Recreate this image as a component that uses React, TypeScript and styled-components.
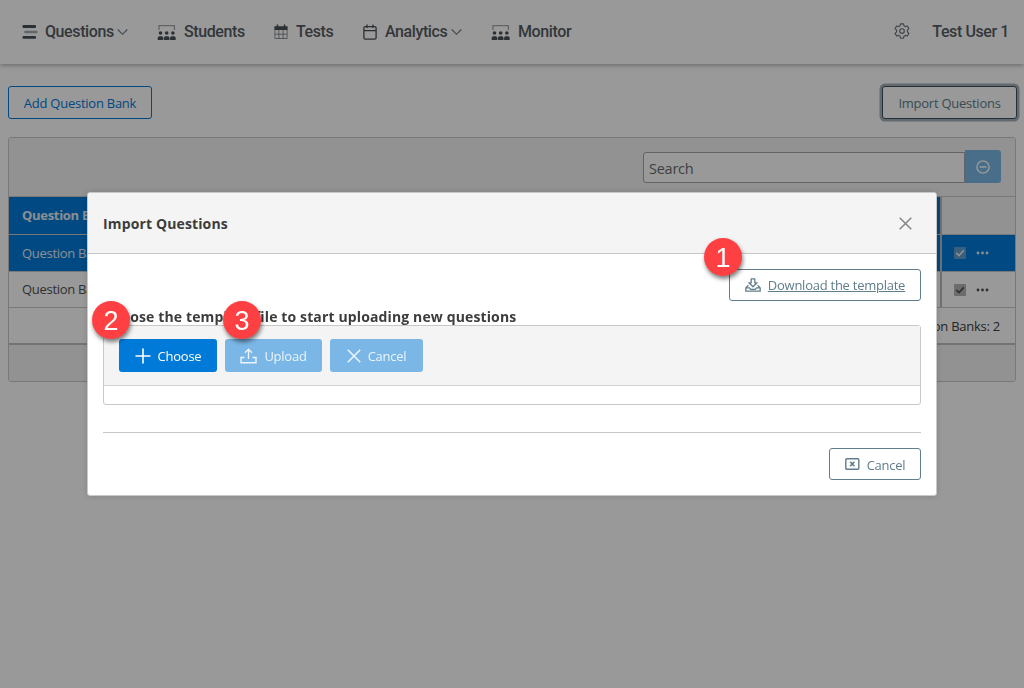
import React from 'react';
import styled, { createGlobalStyle, css } from 'styled-components';

const GlobalStyle = createGlobalStyle`
  * { box-sizing: border-box; }
  html, body { margin: 0; height: 100%; overflow: hidden; }
  body { background: #fff; color: #3c3c3c; font: 13px/19px "Open Sans", "Noto Sans", sans-serif; letter-spacing: -0.25px; }
  button, input { font: inherit; letter-spacing: inherit; margin: 0; }
  svg { display: block; flex: none; }
`;

const Page = styled.div`
  height: 688px;
  display: flex;
  flex-direction: column;
`;

const NavBar = styled.nav`
  height: 64px;
  flex: none;
  display: flex;
  align-items: center;
  padding: 0 15px 0 22px;
  font: 500 16px/20px Roboto, sans-serif;
  letter-spacing: -0.4px;
  color: #555c63;
  box-shadow: 0 1px 5px rgba(0, 0, 0, 0.35);
`;

const NavItem = styled.a<{ $width?: number; $gap?: number }>`
  display: flex;
  align-items: center;
  flex: none;
  gap: ${p => p.$gap ?? 8}px;
  ${p => p.$width && css`width: ${p.$width}px;`}
`;

const NavText = styled.span`
  white-space: nowrap;
`;

const Arrow = styled.span`
  margin-left: -4px;
`;

const Spacer = styled.div`
  flex: 1;
`;

const Gear = styled.span`
  margin: -3px 22px 0 0;
`;

const ActionRow = styled.div`
  display: flex;
  justify-content: space-between;
  padding: 22px 7px 18px 8px;
`;

const OutlineButton = styled.button<{ $tone: string; $focused?: boolean; $width: number; $height?: number }>`
  display: flex;
  align-items: center;
  justify-content: center;
  gap: 7px;
  width: ${p => p.$width}px;
  height: ${p => p.$height ?? 33}px;
  padding: ${p => (p.$height ? 0 : 1)}px 0 0;
  white-space: nowrap;
  color: ${p => p.$tone};
  background: #fff;
  border: 1px solid ${p => p.$tone};
  border-radius: 3px;
  ${p => p.$focused && css`box-shadow: 0 0 0 2.5px #a3b1bb; border-color: #3f4f5c;`}
`;

const Table = styled.section`
  margin: 0 8px;
  border: 1px solid #c8c8c8;
  border-radius: 3px;
  overflow: hidden;
`;

const TableToolbar = styled.div`
  height: 58px;
  background: #f4f4f4;
  display: flex;
  justify-content: flex-end;
  align-items: flex-end;
  padding: 0 14px 13px 0;
`;

const SearchInput = styled.input`
  width: 322px;
  height: 31px;
  border: 1px solid #a6a6a6;
  border-radius: 3px 0 0 3px;
  padding: 1px 5px 0;
  font-size: 14.5px;
  background: #fff;
  &::placeholder { color: #6c6c6c; opacity: 1; }
`;

const SearchButton = styled.button`
  width: 36px;
  height: 33px;
  display: flex;
  align-items: center;
  justify-content: center;
  border: 0;
  border-radius: 0 3px 3px 0;
  color: #fff;
  background: #7ab7e6;
`;

const Row = styled.div<{ $kind: 'head' | 'selected' | 'plain' }>`
  height: ${p => (p.$kind === 'head' ? 38 : p.$kind === 'selected' ? 37 : 36)}px;
  display: grid;
  grid-template-columns: 1fr 75px;
  border-top: 1px solid #c8c8c8;
  background: ${p => (p.$kind === 'selected' ? '#007ad9' : '#fff')};
  color: ${p => (p.$kind === 'plain' ? '#505050' : '#e8eef4')};
  ${p => (p.$kind === 'head' ? css`font-weight: 700; letter-spacing: -0.3px;` : css`letter-spacing: -0.3px;`)}
`;

const Cell = styled.div<{ $fill?: string }>`
  display: flex;
  align-items: center;
  gap: 7px;
  padding: 0 13px;
  background: ${p => p.$fill ?? 'transparent'};
  & + & { border-left: 2px solid #bdbdbd; padding: 0 12px; }
`;

const Check = styled.span<{ $tone: string }>`
  width: 12px;
  height: 12px;
  border-radius: 1px;
  background: ${p => p.$tone};
`;

const SummaryRow = styled.div`
  height: 36px;
  border-top: 1px solid #c8c8c8;
  display: flex;
  align-items: center;
  justify-content: flex-end;
  padding: 1px 15px 0 0;
`;

const TableFooter = styled.div`
  height: 38px;
  border-top: 2px solid #c0c0c0;
  background: #f4f4f4;
`;

const Backdrop = styled.div`
  position: fixed;
  inset: 0;
  display: flex;
  align-items: center;
  justify-content: center;
  background: rgba(0, 0, 0, 0.4);
`;

const Dialog = styled.div`
  position: relative;
  width: 850px;
  height: 304px;
  background: #fff;
  border: 1px solid #c8c8c8;
  border-radius: 3px;
  box-shadow: 0 0 6px rgba(0, 0, 0, 0.16);
`;

const DialogHeader = styled.header`
  height: 61px;
  display: flex;
  align-items: center;
  justify-content: space-between;
  padding: 0 24px 0 15px;
  background: #f4f4f4;
  border-bottom: 1px solid #c8c8c8;
  border-radius: 3px 3px 0 0;
  font-size: 14px;
  letter-spacing: 0.13px;
  font-weight: 700;
  color: #3c3c3c;
`;

const DialogBody = styled.div`
  padding: 15px;
`;

const TemplateRow = styled.div`
  display: flex;
  justify-content: flex-end;
`;

const Underlined = styled.span`
  text-decoration: underline;
`;

const Prompt = styled.h3`
  margin: 5px 0 0;
  height: 19px;
  font-size: 14px;
  line-height: 21px;
  font-weight: 700;
  letter-spacing: 0.13px;
  white-space: nowrap;
`;

const Uploader = styled.div`
  border: 1px solid #c8c8c8;
  border-radius: 3px;
  height: 80px;
`;

const UploadBar = styled.div`
  height: 60px;
  display: flex;
  gap: 8px;
  padding: 13px 15px;
  background: #f4f4f4;
  border-bottom: 1px solid #d4d4d4;
`;

const SolidButton = styled.button<{ $width: number; $disabled?: boolean }>`
  width: ${p => p.$width}px;
  height: 33px;
  display: flex;
  align-items: center;
  justify-content: center;
  gap: 7px;
  padding: 0;
  border: 0;
  border-radius: 3px;
  color: ${p => (p.$disabled ? '#ebf4fb' : '#fff')};
  background: ${p => (p.$disabled ? '#7ab7e6' : '#007ad9')};
`;

const ButtonLabel = styled.span`
  padding-top: 2px;
`;

const DialogFooter = styled.footer`
  margin-top: 27px;
  border-top: 1px solid #c8c8c8;
  padding-top: 15px;
  display: flex;
  justify-content: flex-end;
`;

const Marker = styled.span<{ $x: number; $y: number }>`
  position: absolute;
  left: ${p => p.$x}px;
  top: ${p => p.$y}px;
  width: 38px;
  height: 38px;
  border-radius: 50%;
  background: #ff4043;
  color: #fff;
  font: 27px/40px "Liberation Sans", Arial, sans-serif;
  letter-spacing: 0;
  text-align: center;
  box-shadow: 1px 3px 4px rgba(0, 0, 0, 0.5);
`;

const BarsIcon = () => (
  <svg width="16" height="14" viewBox="0 0 16 14" fill="#495057">
    <rect x="0.5" y="0" width="13.5" height="2.9" rx="1" />
    <rect x="2.3" y="5.7" width="13.2" height="2.5" rx="1" opacity=".5" />
    <rect x="0.5" y="10.9" width="13.5" height="2.9" rx="1" />
  </svg>
);

const ChevronIcon = () => (
  <svg width="11" height="8" viewBox="0 0 11 8" fill="none" stroke="#6c757d" strokeWidth="1.1">
    <path d="M.7 1.5 5.5 6.3l4.8-4.8" />
  </svg>
);

const PeopleIcon = () => (
  <svg width="20" height="17" viewBox="0 0 20 17" fill="#495057">
    <path d="M2 6V1.6h15.4V6" fill="none" stroke="#495057" strokeWidth="1.3" opacity=".5" />
    {[3.5, 9.7, 15.9].map(x => (
      <g key={x}>
        <circle cx={x} cy="9" r="1.8" />
        <path d={`M${x - 2.9} 15.3c0-2 .6-3 1.800-3h2.200c1.200 0 1.800 1 1.800 3q0 .8-.8.8h-4.200q-.8 0-.8-.8z`} />
      </g>
    ))}
  </svg>
);

const GridCalendarIcon = () => (
  <svg width="14" height="16" viewBox="0 0 14 16">
    <g fill="none" stroke="#495057" opacity=".6">
      <path d="M.9 6v8.5h12.2V6M1 10.2h12M4.9 6v8.5M9.1 6v8.5" />
    </g>
    <path d="M.4 2.2h2.3V.6h1.5v1.6h5.6V.6h1.5v1.6h2.3V6H.4z" fill="#495057" />
  </svg>
);

const CalendarIcon = () => (
  <svg width="14" height="16" viewBox="0 0 14 16" fill="none" stroke="#495057" strokeWidth="1.3">
    <rect x=".9" y="2.6" width="12.2" height="12.5" rx="1.4" />
    <path d="M1 6.6h12M4 .5v3.600M10 .5v3.600" />
  </svg>
);

const GearIcon = () => (
  <svg width="16" height="16" viewBox="0 0 16 16" fill="none" stroke="#6c757d" strokeWidth="1.15" strokeLinejoin="round">
    <path d="M6.5.8h3l.5 2 1.3.8 2.100-.6 1.500 2.600-1.500 1.600v1.600l1.500 1.600-1.500 2.600-2.100-.6-1.300.8-.5 2h-3l-.5-2-1.300-.8-2.100.6-1.500-2.600 1.500-1.600V7.200L1.100 5.600 2.600 3l2.100.6L6 2.800z" />
    <circle cx="8" cy="8" r="2.3" />
  </svg>
);

const MinusCircleIcon = () => (
  <svg width="14" height="14" viewBox="0 0 14 14" fill="none" stroke="currentColor" strokeWidth="1.4">
    <circle cx="7" cy="7" r="6.1" />
    <path d="M3.500 7h7" />
  </svg>
);

const CheckIcon = () => (
  <svg width="12" height="12" viewBox="0 0 12 12" fill="none" stroke="currentColor" strokeWidth="1.7">
    <path d="M2.3 5.9 5 8.5l4.8-5.2" />
  </svg>
);

const DotsIcon = () => (
  <svg width="16" height="4" viewBox="0 0 16 4" fill="currentColor">
    <circle cx="5" cy="2" r="1.4" />
    <circle cx="9.5" cy="2" r="1.4" />
    <circle cx="14" cy="2" r="1.4" />
  </svg>
);

const CloseIcon = ({ size = 13, tone = 'currentColor' }: { size?: number; tone?: string }) => (
  <svg width={size} height={size} viewBox="0 0 13 13" fill="none" stroke={tone} strokeWidth="1.5">
    <path d="m.7.7 11.600 11.600M12.300.7.7 12.300" />
  </svg>
);

const DownloadIcon = () => (
  <svg width="16" height="14" viewBox="0 0 16 14" fill="none" stroke="currentColor" strokeWidth="1.3" strokeLinejoin="round">
    <path d="M6.2.8h3.600v4h2.300L8 8.800 3.900 4.800h2.300z" />
    <path d="M3.400 7.200.8 9.900v3.300h14.400V9.900l-2.600-2.700M.8 9.900h3.700l1.200 1.500h4.600l1.200-1.500h3.700" />
  </svg>
);

const PlusIcon = () => (
  <svg width="16" height="16" viewBox="0 0 16 16" fill="none" stroke="currentColor" strokeWidth="1.6">
    <path d="M8 .5v15M.5 8h15" />
  </svg>
);

const UploadIcon = () => (
  <svg width="17" height="16" viewBox="0 0 17 16" fill="none" stroke="currentColor" strokeWidth="1.4">
    <path d="M8.500 11V1.500M5 4.700l3.500-3.500L12 4.700M4.500 9.500H1v5.300h15V9.500h-3.500" />
  </svg>
);

const BoxCloseIcon = () => (
  <svg width="15" height="12" viewBox="0 0 15 12" fill="none" stroke="currentColor" strokeWidth="1.4">
    <rect x=".8" y=".8" width="13" height="10.4" rx="1" />
    <path d="m5.200 3.900 4.200 4.200m0-4.200L5.200 8.100" strokeWidth="1.5" />
  </svg>
);

export default function App() {
  return (
    <>
      <GlobalStyle />
      <Page>
        <NavBar>
          <NavItem $width={135} $gap={7}>
            <BarsIcon />
            <NavText>Questions</NavText>
            <Arrow><ChevronIcon /></Arrow>
          </NavItem>
          <NavItem $width={117} $gap={7}>
            <PeopleIcon />
            <NavText>Students</NavText>
          </NavItem>
          <NavItem $width={89}>
            <GridCalendarIcon />
            <NavText>Tests</NavText>
          </NavItem>
          <NavItem $width={128}>
            <CalendarIcon />
            <NavText>Analytics</NavText>
            <Arrow><ChevronIcon /></Arrow>
          </NavItem>
          <NavItem $gap={7}>
            <PeopleIcon />
            <NavText>Monitor</NavText>
          </NavItem>
          <Spacer />
          <Gear><GearIcon /></Gear>
          <NavText>Test User 1</NavText>
        </NavBar>

        <ActionRow>
          <OutlineButton $tone="#007ad9" $width={144}>Add Question Bank</OutlineButton>
          <OutlineButton $tone="#607d8b" $width={135} $focused>Import Questions</OutlineButton>
        </ActionRow>

        <Table>
          <TableToolbar>
            <SearchInput placeholder="Search" />
            <SearchButton><MinusCircleIcon /></SearchButton>
          </TableToolbar>
          <Row $kind="head">
            <Cell $fill="#007ad9">Question Bank</Cell>
            <Cell $fill="#f4f4f4" />
          </Row>
          <Row $kind="selected">
            <Cell>Question Bank 1</Cell>
            <Cell>
              <Check $tone="#5f9fd0"><CheckIcon /></Check>
              <DotsIcon />
            </Cell>
          </Row>
          <Row $kind="plain">
            <Cell>Question Bank 2</Cell>
            <Cell>
              <Check $tone="#b5b5b5"><CheckIcon /></Check>
              <DotsIcon />
            </Cell>
          </Row>
          <SummaryRow>Total Question Banks: 2</SummaryRow>
          <TableFooter />
        </Table>
      </Page>

      <Backdrop>
        <Dialog>
          <DialogHeader>
            Import Questions
            <CloseIcon tone="#848484" />
          </DialogHeader>
          <DialogBody>
            <TemplateRow>
              <OutlineButton $tone="#607d8b" $width={192} $height={32}>
                <DownloadIcon />
                <Underlined>Download the template</Underlined>
              </OutlineButton>
            </TemplateRow>
            <Prompt>Choose the template file to start uploading new questions</Prompt>
            <Uploader>
              <UploadBar>
                <SolidButton $width={98}><PlusIcon /><ButtonLabel>Choose</ButtonLabel></SolidButton>
                <SolidButton $width={97} $disabled><UploadIcon /><ButtonLabel>Upload</ButtonLabel></SolidButton>
                <SolidButton $width={93} $disabled><CloseIcon size={14} /><ButtonLabel>Cancel</ButtonLabel></SolidButton>
              </UploadBar>
            </Uploader>
            <DialogFooter>
              <OutlineButton $tone="#607d8b" $width={92} $height={32}>
                <BoxCloseIcon />
                <ButtonLabel>Cancel</ButtonLabel>
              </OutlineButton>
            </DialogFooter>
          </DialogBody>
          <Marker $x={616} $y={45}>1</Marker>
          <Marker $x={4} $y={108}>2</Marker>
          <Marker $x={135} $y={108}>3</Marker>
        </Dialog>
      </Backdrop>
    </>
  );
}
